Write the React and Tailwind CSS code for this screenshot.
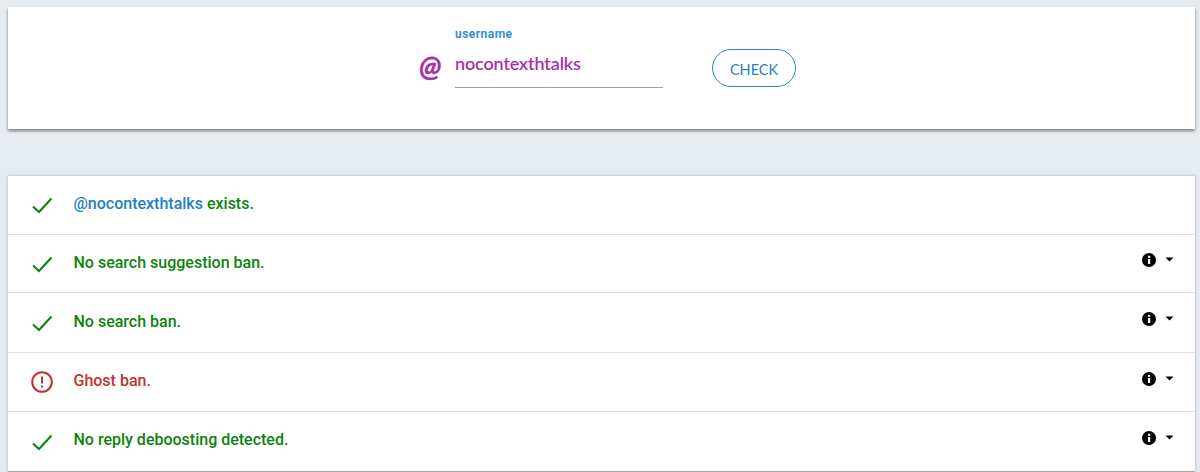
function Check() {
  return (
    <svg width="24" height="24" viewBox="0 0 24 24" fill="none" stroke="#0f7d0f" strokeWidth="2">
      <path d="M3 13.5l6 5.5L21.5 5.5" />
    </svg>
  );
}

function Warn() {
  return (
    <svg width="24" height="24" viewBox="0 0 24 24" fill="none">
      <circle cx="12" cy="12" r="9.8" stroke="#c62f2f" strokeWidth="2" />
      <rect x="11" y="6.5" width="2" height="7" fill="#c62f2f" />
      <rect x="11" y="15.5" width="2" height="2" fill="#c62f2f" />
    </svg>
  );
}

function Info() {
  return (
    <div className="mb-[7px] flex items-center">
      <svg width="16" height="16" viewBox="0 0 16 16">
        <circle cx="8" cy="8" r="7" fill="#000" />
        <rect x="7" y="7" width="2.2" height="5" fill="#fff" />
        <rect x="7" y="3.8" width="2.2" height="2" fill="#fff" />
      </svg>
      <svg className="mb-[1px] ml-[8px]" width="9" height="5" viewBox="0 0 9 5">
        <path d="M0.5 0.5h8L4.5 4.5z" fill="#000" />
      </svg>
    </div>
  );
}

const rows = [
  { text: "No search suggestion ban.", height: "h-[58px]", nudge: "mb-[1px]" },
  { text: "No search ban.", height: "h-[60px]", nudge: "mb-[1px]" },
  { text: "Ghost ban.", height: "h-[59px]", nudge: "mb-[3px]", bad: true },
  { text: "No reply deboosting detected.", height: "h-[60px]", nudge: "mb-[3px]" },
];

export default function App() {
  return (
    <div className="h-[472px] overflow-hidden bg-[#e6ebef] pt-[7px] pl-2 pr-[5px] font-['Roboto',sans-serif]">
      <div className="flex h-[122px] justify-center bg-white shadow-[0_2px_3px_rgba(0,0,0,0.45)]">
        <div className="ml-[12px] flex">
          <div className="mt-[44px] w-[36px] font-['Lato',sans-serif] text-[29px] leading-[30px] font-bold text-[#a92ea9] italic [-webkit-text-stroke:0.4px_#a92ea9]">@</div>
          <div className="w-[208px]">
            <div className="mt-[20px] text-xs leading-[14px] font-medium tracking-[0.5px] text-[#2a8fd0] [-webkit-text-stroke:0.2px_#2a8fd0]">username</div>
            <div className="mt-[5px] h-[42px] border-b border-[#8fa3b5] font-['Lato',sans-serif] text-lg leading-[34px] font-medium tracking-[-0.1px] text-[#a92ea9] [-webkit-text-stroke:0.15px_#a92ea9]">nocontexthtalks</div>
          </div>
          <button className="mt-[42px] ml-[49px] h-[38px] w-[84px] rounded-[19px] border border-[#2a86c8] pt-[3px] font-['Lato',sans-serif] text-[14.5px] text-[#2a7fb8]">CHECK</button>
        </div>
      </div>
      <div className="mt-[47px] bg-white shadow-[0_0_3px_rgba(0,0,0,0.25)]">
        <div className="flex h-[59px] items-center border-b border-[#dfdfdf] pl-[22px]">
          <Check />
          <div className="mb-[2px] ml-[19.5px] text-base font-medium text-[#0c840c]">
            <span className="text-[#1f7fc4]">@nocontexthtalks</span> exists.
          </div>
        </div>
        {rows.map((row) => (
          <div key={row.text} className={`flex items-center border-b border-[#dfdfdf] pr-[21px] pl-[22px] last:border-[#a8a8a8] ${row.height}`}>
            {row.bad ? <Warn /> : <Check />}
            <div className={`ml-[19.5px] flex-1 text-base font-medium ${row.nudge} ${row.bad ? "text-[#c62f2f]" : "text-[#0c840c]"}`}>{row.text}</div>
            <Info />
          </div>
        ))}
      </div>
    </div>
  );
}
